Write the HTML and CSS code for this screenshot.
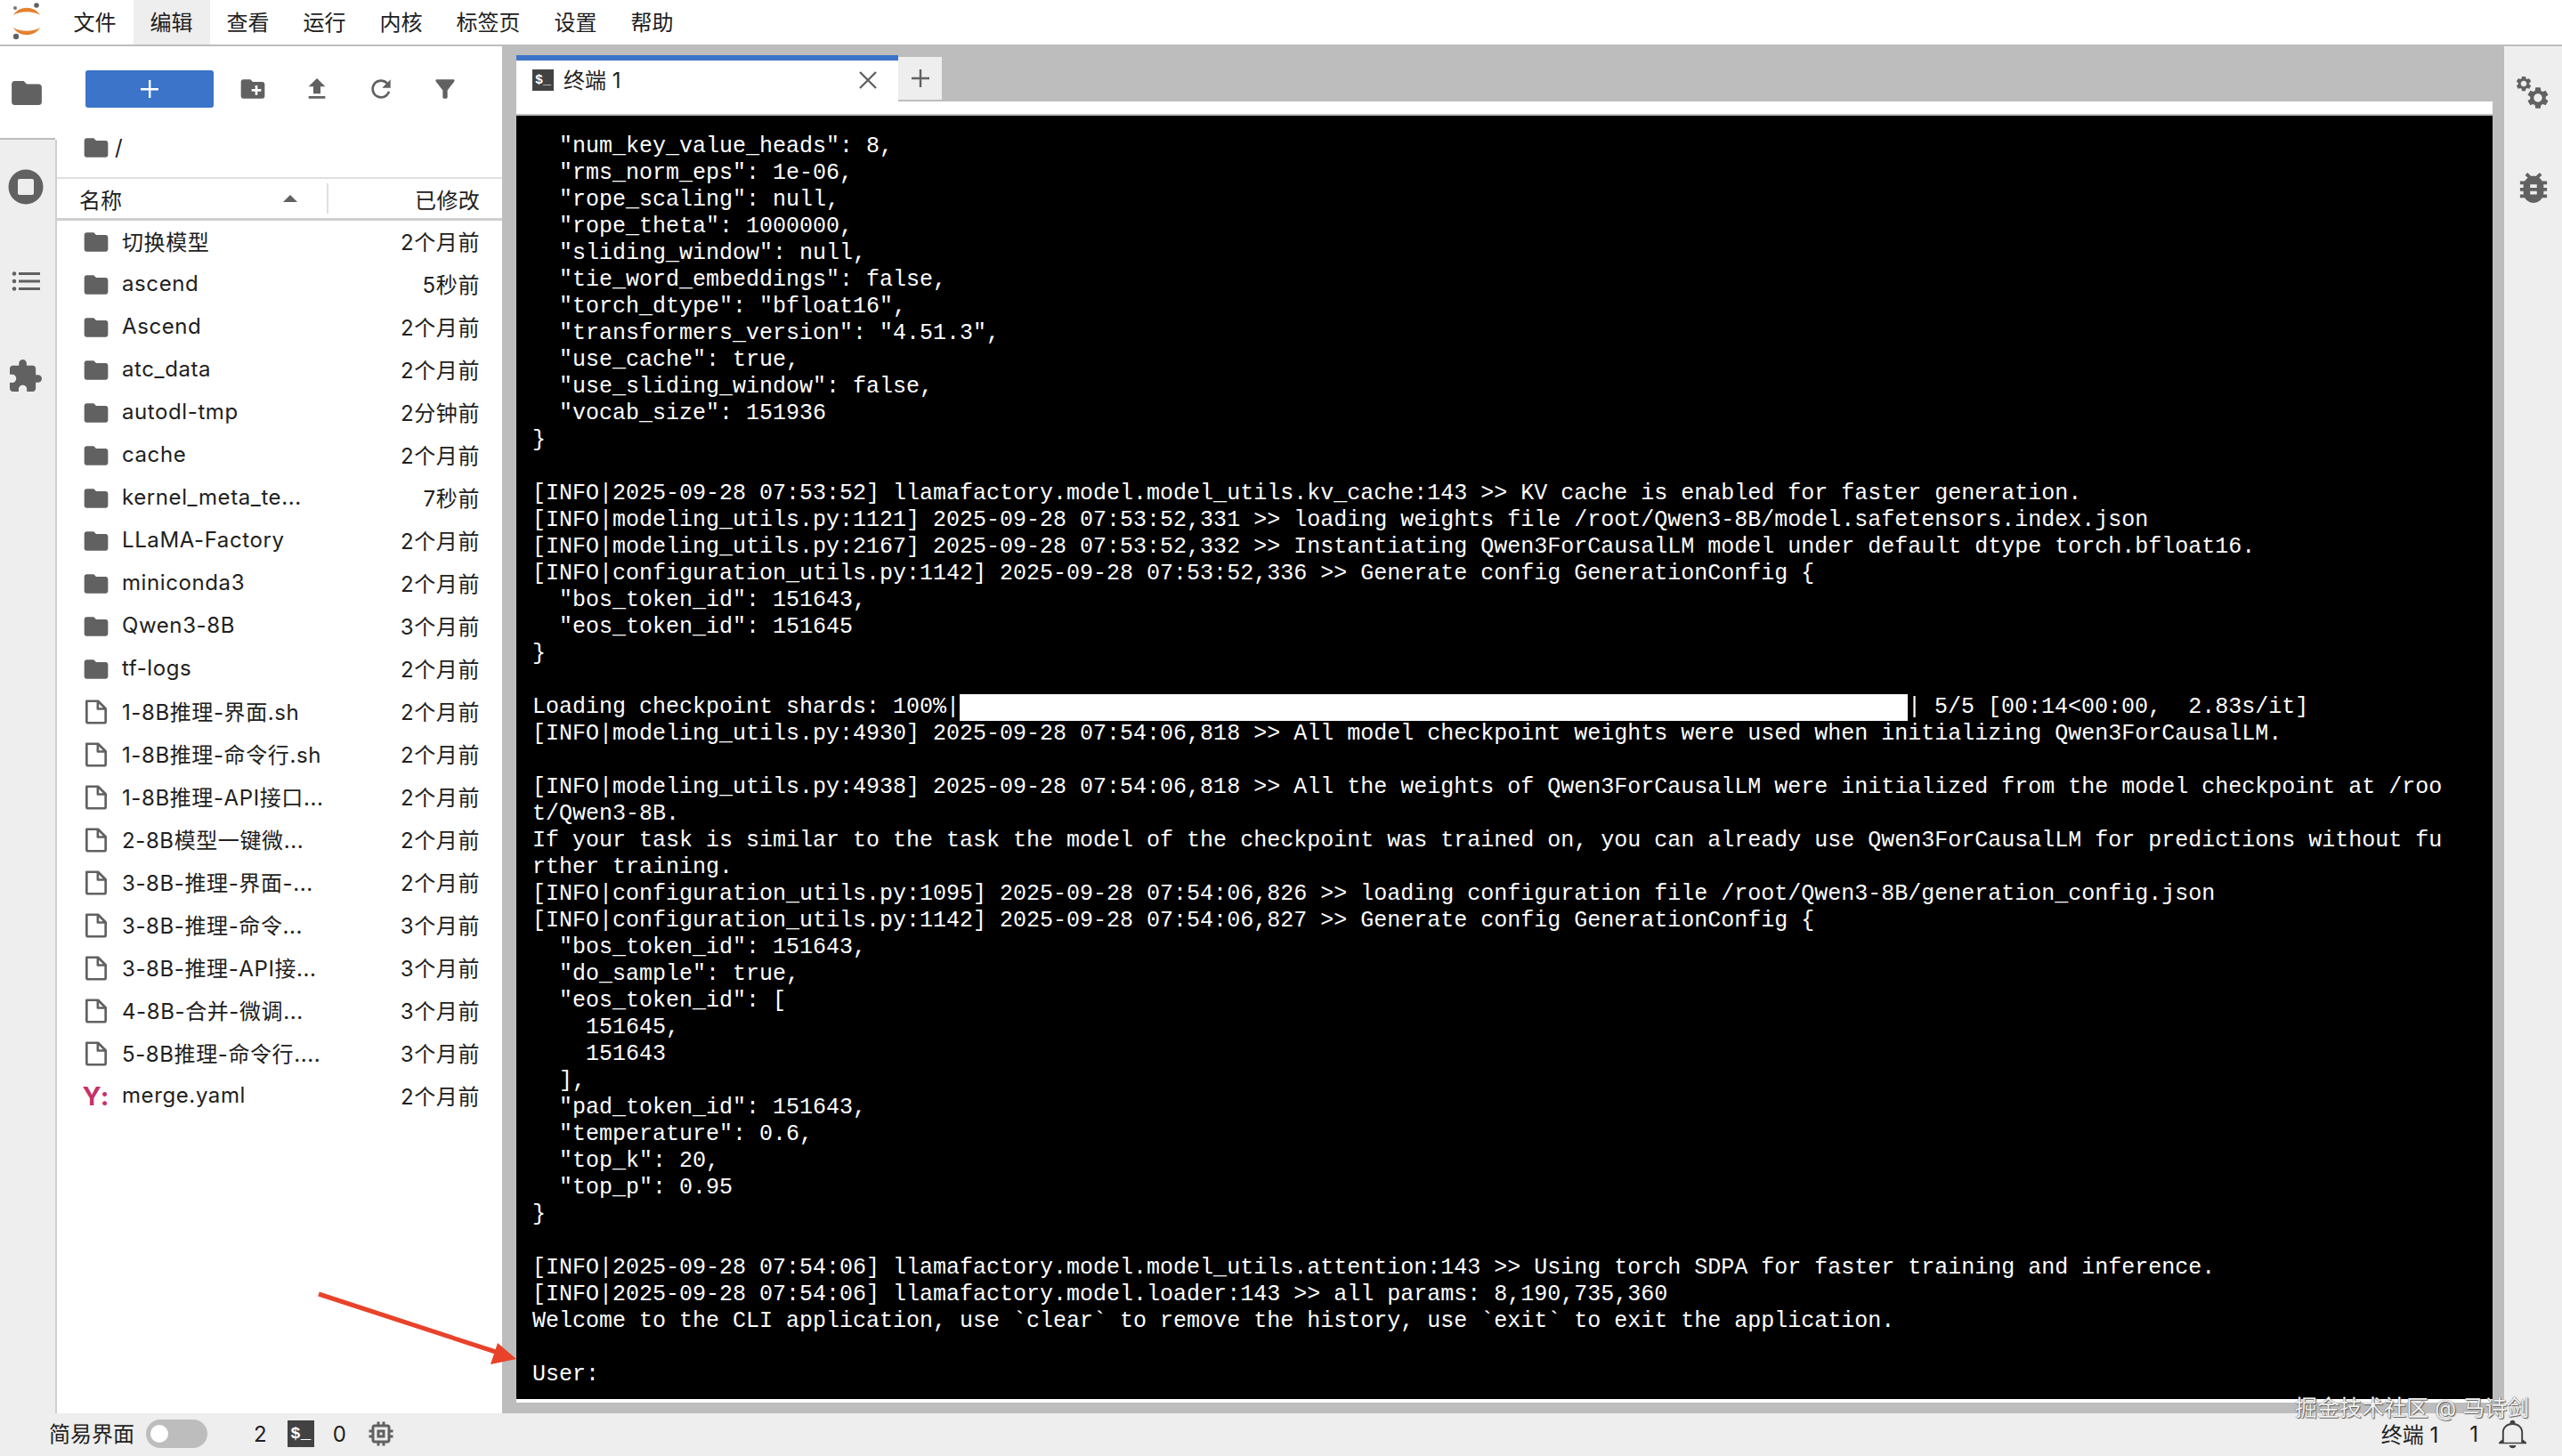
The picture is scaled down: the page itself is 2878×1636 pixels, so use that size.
FILE: index.html
```html
<!DOCTYPE html>
<html lang="zh">
<head>
<meta charset="utf-8">
<title>JupyterLab 终端</title>
<link rel="stylesheet" href="styles.css">
</head>
<body>
<svg class="defs" width="0" height="0" aria-hidden="true">
  <symbol id="i-folder" viewBox="0 0 24 24"><path d="M10 4H4c-1.100 0-1.990.9-1.990 2L2 18c0 1.100.9 2 2 2h16c1.100 0 2-.9 2-2V8c0-1.100-.9-2-2-2h-8l-2-2z"/></symbol>
  <symbol id="i-file" viewBox="0 0 24 24"><path class="outline" d="M4 2.800h9.600l6.400 6.400v10.600a1.400 1.400 0 0 1-1.400 1.400H5.400A1.400 1.400 0 0 1 4 19.800zM13.400 3v6.400H20"/></symbol>
  <symbol id="i-gear" viewBox="0 0 24 24"><path d="M19.430 12.980c.04-.32.07-.64.07-.98s-.03-.66-.07-.98l2.110-1.650c.19-.15.24-.42.12-.64l-2-3.460c-.12-.22-.39-.3-.61-.22l-2.490 1c-.52-.4-1.080-.73-1.690-.98l-.38-2.650C14.460 2.180 14.250 2 14 2h-4c-.25 0-.46.18-.49.42l-.38 2.650c-.61.25-1.170.59-1.690.98l-2.490-1c-.23-.09-.49 0-.61.22l-2 3.460c-.13.22-.07.49.12.64l2.110 1.650c-.04.32-.07.65-.07.98s.03.66.07.98l-2.110 1.650c-.19.15-.24.42-.12.64l2 3.460c.12.22.39.3.61.22l2.490-1c.52.4 1.080.73 1.690.98l.38 2.650c.03.24.24.42.49.42h4c.25 0 .46-.18.49-.42l.38-2.650c.61-.25 1.170-.59 1.690-.98l2.490 1c.23.09.49 0 .61-.22l2-3.460c.12-.22.07-.49-.12-.64l-2.110-1.650zM12 16c-2.200 0-4-1.800-4-4s1.800-4 4-4 4 1.800 4 4-1.800 4-4 4z"/></symbol>
</svg>
<div class="app">
  <header class="menu">
    <div class="logo">
      <svg viewBox="0 0 30 42" width="30" height="42">
        <path fill="#e6812f" d="M0 14C6 3 24 3 30 14 22 9 8 9 0 14zM0 28c8 5 22 5 30 0-6 11-24 11-30 0z"/>
        <circle cx="26" cy="3" r="2.800" fill="#616161"/><circle cx="2" cy="6" r="2" fill="#757575"/><circle cx="3" cy="38" r="3.200" fill="#616161"/>
      </svg>
    </div>
    <span class="menu-item">文件</span>
    <span class="menu-item active">编辑</span>
    <span class="menu-item">查看</span>
    <span class="menu-item">运行</span>
    <span class="menu-item">内核</span>
    <span class="menu-item">标签页</span>
    <span class="menu-item">设置</span>
    <span class="menu-item">帮助</span>
  </header>
  <main class="workspace">
    <nav class="rail rail-left">
      <div class="rail-tab current"><svg class="icon i34" viewBox="2 4 20 16"><use href="#i-folder" x="0" y="0" width="24" height="24"/></svg></div>
      <div class="rail-tab">
        <svg class="icon" width="40" height="40" viewBox="0 0 40 40"><circle cx="20" cy="20" r="19.500"/><rect x="11" y="11" width="18" height="18" rx="2" fill="#eee"/></svg>
      </div>
      <div class="rail-tab">
        <svg class="icon" width="32" height="22" viewBox="0 0 32 22"><circle cx="3" cy="2.500" r="2.300"/><circle cx="3" cy="11" r="2.300"/><circle cx="3" cy="19.500" r="2.300"/><rect x="8" y="1" width="24" height="3"/><rect x="8" y="9.500" width="24" height="3"/><rect x="8" y="18" width="24" height="3"/></svg>
      </div>
      <div class="rail-tab">
        <svg class="icon" width="36" height="38" viewBox="2 1 21 21"><path d="M20.500 11H19V7c0-1.100-.9-2-2-2h-4V3.500C13 2.120 11.880 1 10.500 1S8 2.120 8 3.500V5H4c-1.100 0-1.990.9-1.990 2v3.800H3.500c1.490 0 2.700 1.210 2.700 2.700s-1.210 2.700-2.700 2.700H2V20c0 1.100.9 2 2 2h3.800v-1.500c0-1.490 1.210-2.700 2.700-2.700 1.490 0 2.700 1.210 2.700 2.700V22H17c1.100 0 2-.9 2-2v-4h1.500c1.380 0 2.500-1.120 2.500-2.500S21.880 11 20.500 11z"/></svg>
      </div>
      <div class="rail-fill"></div>
    </nav>

    <section class="panel">
      <div class="toolbar">
        <button class="new-btn"><svg width="24" height="24" viewBox="0 0 24 24"><path d="M11 2h2.400v9H22v2.400h-8.600V22H11v-8.600H2V11h9z"/></svg></button>
        <svg class="icon tool" viewBox="0 0 24 24"><path d="M20 6h-8l-2-2H4c-1.110 0-1.990.89-1.990 2L2 18c0 1.110.89 2 2 2h16c1.110 0 2-.89 2-2V8c0-1.110-.89-2-2-2zm-1 8h-3v3h-2v-3h-3v-2h3V9h2v3h3v2z"/></svg>
        <svg class="icon tool" viewBox="0 0 24 24"><path d="M9 16h6v-6h4l-7-7-7 7h4zm-4 2h14v2H5z"/></svg>
        <svg class="icon tool" viewBox="0 0 24 24"><path d="M17.650 6.350C16.200 4.900 14.210 4 12 4c-4.420 0-7.990 3.580-7.990 8s3.570 8 7.990 8c3.730 0 6.840-2.550 7.730-6h-2.080c-.82 2.330-3.040 4-5.650 4-3.310 0-6-2.690-6-6s2.690-6 6-6c1.660 0 3.140.69 4.220 1.780L13 11h7V4l-2.350 2.350z"/></svg>
        <svg class="icon tool" viewBox="0 0 24 24"><path d="M4.250 5.610C6.270 8.200 10 13 10 13v6c0 .55.45 1 1 1h2c.55 0 1-.45 1-1v-6s3.720-4.800 5.740-7.390c.51-.66.04-1.610-.79-1.610H5.040c-.83 0-1.300.95-.79 1.610z"/></svg>
      </div>
      <div class="crumbs">
        <svg class="icon row-icon"><use href="#i-folder"/></svg>
        <span class="crumb-sep">/</span>
      </div>
      <div class="list-head">
        <span class="col-name">名称</span>
        <span class="sort-arrow"></span>
        <span class="col-date">已修改</span>
      </div>
      <ul class="files">
        <li><svg class="icon row-icon"><use href="#i-folder"/></svg><span class="name">切换模型</span><span class="date">2个月前</span></li>
        <li><svg class="icon row-icon"><use href="#i-folder"/></svg><span class="name">ascend</span><span class="date">5秒前</span></li>
        <li><svg class="icon row-icon"><use href="#i-folder"/></svg><span class="name">Ascend</span><span class="date">2个月前</span></li>
        <li><svg class="icon row-icon"><use href="#i-folder"/></svg><span class="name">atc_data</span><span class="date">2个月前</span></li>
        <li><svg class="icon row-icon"><use href="#i-folder"/></svg><span class="name">autodl-tmp</span><span class="date">2分钟前</span></li>
        <li><svg class="icon row-icon"><use href="#i-folder"/></svg><span class="name">cache</span><span class="date">2个月前</span></li>
        <li><svg class="icon row-icon"><use href="#i-folder"/></svg><span class="name">kernel_meta_te...</span><span class="date">7秒前</span></li>
        <li><svg class="icon row-icon"><use href="#i-folder"/></svg><span class="name">LLaMA-Factory</span><span class="date">2个月前</span></li>
        <li><svg class="icon row-icon"><use href="#i-folder"/></svg><span class="name">miniconda3</span><span class="date">2个月前</span></li>
        <li><svg class="icon row-icon"><use href="#i-folder"/></svg><span class="name">Qwen3-8B</span><span class="date">3个月前</span></li>
        <li><svg class="icon row-icon"><use href="#i-folder"/></svg><span class="name">tf-logs</span><span class="date">2个月前</span></li>
        <li><svg class="icon row-icon"><use href="#i-file"/></svg><span class="name">1-8B推理-界面.sh</span><span class="date">2个月前</span></li>
        <li><svg class="icon row-icon"><use href="#i-file"/></svg><span class="name">1-8B推理-命令行.sh</span><span class="date">2个月前</span></li>
        <li><svg class="icon row-icon"><use href="#i-file"/></svg><span class="name">1-8B推理-API接口...</span><span class="date">2个月前</span></li>
        <li><svg class="icon row-icon"><use href="#i-file"/></svg><span class="name">2-8B模型一键微...</span><span class="date">2个月前</span></li>
        <li><svg class="icon row-icon"><use href="#i-file"/></svg><span class="name">3-8B-推理-界面-...</span><span class="date">2个月前</span></li>
        <li><svg class="icon row-icon"><use href="#i-file"/></svg><span class="name">3-8B-推理-命令...</span><span class="date">3个月前</span></li>
        <li><svg class="icon row-icon"><use href="#i-file"/></svg><span class="name">3-8B-推理-API接...</span><span class="date">3个月前</span></li>
        <li><svg class="icon row-icon"><use href="#i-file"/></svg><span class="name">4-8B-合并-微调...</span><span class="date">3个月前</span></li>
        <li><svg class="icon row-icon"><use href="#i-file"/></svg><span class="name">5-8B推理-命令行....</span><span class="date">3个月前</span></li>
        <li><span class="row-icon yaml">Y:</span><span class="name">merge.yaml</span><span class="date">2个月前</span></li>
      </ul>
    </section>

    <section class="dock">
      <div class="tabbar">
        <div class="tab">
          <span class="term-icon tab-term">$_</span>
          <span class="tab-label">终端 1</span>
          <svg class="tab-close" width="22" height="22" viewBox="0 0 22 22"><path d="M2 2l18 18M20 2L2 20"/></svg>
        </div>
        <div class="tab-add"><svg width="22" height="22" viewBox="0 0 22 22"><path d="M11 1v20M1 11h20"/></svg></div>
      </div>
      <div class="tab-gap"></div>
      <pre class="terminal">  "num_key_value_heads": 8,
  "rms_norm_eps": 1e-06,
  "rope_scaling": null,
  "rope_theta": 1000000,
  "sliding_window": null,
  "tie_word_embeddings": false,
  "torch_dtype": "bfloat16",
  "transformers_version": "4.51.3",
  "use_cache": true,
  "use_sliding_window": false,
  "vocab_size": 151936
}

[INFO|2025-09-28 07:53:52] llamafactory.model.model_utils.kv_cache:143 &gt;&gt; KV cache is enabled for faster generation.
[INFO|modeling_utils.py:1121] 2025-09-28 07:53:52,331 &gt;&gt; loading weights file /root/Qwen3-8B/model.safetensors.index.json
[INFO|modeling_utils.py:2167] 2025-09-28 07:53:52,332 &gt;&gt; Instantiating Qwen3ForCausalLM model under default dtype torch.bfloat16.
[INFO|configuration_utils.py:1142] 2025-09-28 07:53:52,336 &gt;&gt; Generate config GenerationConfig {
  "bos_token_id": 151643,
  "eos_token_id": 151645
}

Loading checkpoint shards: 100%|<span class="progress"></span>| 5/5 [00:14&lt;00:00,  2.83s/it]
[INFO|modeling_utils.py:4930] 2025-09-28 07:54:06,818 &gt;&gt; All model checkpoint weights were used when initializing Qwen3ForCausalLM.

[INFO|modeling_utils.py:4938] 2025-09-28 07:54:06,818 &gt;&gt; All the weights of Qwen3ForCausalLM were initialized from the model checkpoint at /roo
t/Qwen3-8B.
If your task is similar to the task the model of the checkpoint was trained on, you can already use Qwen3ForCausalLM for predictions without fu
rther training.
[INFO|configuration_utils.py:1095] 2025-09-28 07:54:06,826 &gt;&gt; loading configuration file /root/Qwen3-8B/generation_config.json
[INFO|configuration_utils.py:1142] 2025-09-28 07:54:06,827 &gt;&gt; Generate config GenerationConfig {
  "bos_token_id": 151643,
  "do_sample": true,
  "eos_token_id": [
    151645,
    151643
  ],
  "pad_token_id": 151643,
  "temperature": 0.6,
  "top_k": 20,
  "top_p": 0.95
}

[INFO|2025-09-28 07:54:06] llamafactory.model.model_utils.attention:143 &gt;&gt; Using torch SDPA for faster training and inference.
[INFO|2025-09-28 07:54:06] llamafactory.model.loader:143 &gt;&gt; all params: 8,190,735,360
Welcome to the CLI application, use `clear` to remove the history, use `exit` to exit the application.

User:</pre>
      <div class="term-foot"></div>
    </section>

    <nav class="rail rail-right">
      <div class="rail-tab">
        <svg class="icon" width="38" height="38" viewBox="0 0 38 38">
          <use href="#i-gear" x="-2" y="-2" width="20" height="20"/>
          <use href="#i-gear" x="10" y="10" width="28" height="28"/>
        </svg>
      </div>
      <div class="rail-tab">
        <svg class="icon" width="34" height="36" viewBox="3 3 18 18"><path d="M20 8h-2.810c-.45-.78-1.070-1.450-1.820-1.960L17 4.410 15.590 3l-2.170 2.170C12.960 5.060 12.490 5 12 5c-.49 0-.96.06-1.410.17L8.410 3 7 4.410l1.620 1.630C7.880 6.550 7.260 7.220 6.810 8H4v2h2.090c-.05.33-.09.66-.09 1v1H4v2h2v1c0 .34.04.67.09 1H4v2h2.810c1.040 1.790 2.970 3 5.190 3s4.150-1.210 5.190-3H20v-2h-2.090c.05-.33.09-.66.09-1v-1h2v-2h-2v-1c0-.34-.04-.67-.09-1H20V8zm-6 8h-4v-2h4v2zm0-4h-4v-2h4v2z"/></svg>
      </div>
    </nav>
  </main>
  <footer class="status">
    <span class="mode-label">简易界面</span>
    <span class="toggle"><span class="knob"></span></span>
    <span class="count first">2</span>
    <span class="term-icon status-term">$_</span>
    <span class="count">0</span>
    <svg class="icon chip" viewBox="2 2 20 20"><path d="M15 9H9v6h6V9zm-2 4h-2v-2h2v2zm8-2V9h-2V7c0-1.100-.9-2-2-2h-2V3h-2v2h-2V3H9v2H7c-1.100 0-2 .9-2 2v2H3v2h2v2H3v2h2v2c0 1.100.9 2 2 2h2v2h2v-2h2v2h2v-2h2c1.100 0 2-.9 2-2v-2h2v-2h-2v-2h2zm-4 6H7V7h10v10z"/></svg>
    <span class="status-spacer"></span>
    <span class="status-term-name">终端 1</span>
    <span class="count notif">1</span>
    <svg class="icon bell" viewBox="3.500 2 17 20.500" preserveAspectRatio="none"><path d="M12 22c1.100 0 2-.9 2-2h-4c0 1.100.9 2 2 2zm6-6v-5c0-3.070-1.640-5.640-4.500-6.320V4c0-.83-.67-1.500-1.500-1.500s-1.500.67-1.500 1.500v.68C7.630 5.360 6 7.920 6 11v5l-2 2v1h16v-1l-2-2zm-1 2H7v-7c0-2.900 1.800-5.200 5-5.200s5 2.300 5 5.200v7z"/></svg>
  </footer>
  <svg class="arrow" width="240" height="100" viewBox="350 1445 240 100">
    <path d="M358 1454L560 1520" class="arrow-line"/>
    <path d="M559 1509L580 1527 551 1533z" class="arrow-head"/>
  </svg>
  <div class="watermark">掘金技术社区 @ 马诗剑</div>
</div>
</body>
</html>
```
FILE: styles.css
```css
* { box-sizing: border-box; }
html, body { margin: 0; padding: 0; }
body {
  width: 2878px;
  height: 1636px;
  overflow: hidden;
  background: #fff;
  color: #212121;
  font-family: Inter, "Noto Sans CJK SC", sans-serif;
  font-size: 24px;
}
.defs { position: absolute; }
.app { position: relative; display: flex; flex-direction: column; width: 2878px; height: 1636px; }
.icon { fill: #616161; display: block; flex: none; }
.outline { fill: none; stroke: #616161; stroke-width: 2; stroke-linejoin: round; }

/* menu */
.menu {
  display: flex;
  align-items: stretch;
  flex: none;
  height: 52px;
  background: #fff;
  border-bottom: 2px solid #bdbdbd;
}
.logo { width: 63.500px; padding: 3px 0 0 15px; }
.menu-item { display: flex; align-items: center; padding: 0 19px 3px; }
.menu-item.active { background: #eee; }

/* layout */
.workspace { flex: 1; display: flex; min-height: 0; }
.rail { flex: none; display: flex; flex-direction: column; background: #eee; }
.rail-left { width: 64px; background: #fff; }
.rail-right { width: 65px; }
.rail-tab { height: 106px; display: flex; align-items: center; justify-content: center; }
.rail-left .rail-tab { background: #eee; padding-right: 4px; border-right: 2px solid #cfcfcf; }
.rail-left .rail-tab.current { height: 105px; background: #fff; border-right: 0; padding-right: 4px; position: relative; }
.rail-left .rail-tab.current::after {
  content: ""; position: absolute; left: 0; right: 2px; bottom: 0; height: 2px; background: #bdbdbd;
}
.rail-fill { flex: 1; background: #eee; border-right: 2px solid #cfcfcf; }
.i34 { width: 34px; height: 27px; }

/* file panel */
.panel { flex: none; width: 500px; display: flex; flex-direction: column; background: #fff; }
.toolbar { height: 84px; display: flex; align-items: flex-start; padding: 27px 0 0 32px; }
.new-btn {
  width: 144px; height: 42px; padding: 0; border: 0; border-radius: 3px;
  background: #3b74c9; display: flex; align-items: center; justify-content: center; margin-right: 28px;
}
.new-btn svg { fill: #fff; }
.tool { width: 32px; height: 32px; margin: 5px 40px 0 0; }
.crumbs { height: 63px; display: flex; align-items: center; padding: 0 0 4px 28px; }
.crumb-sep { margin-left: 5px; }
.row-icon { width: 32px; height: 32px; flex: none; }
.list-head {
  height: 49px;
  flex: none;
  display: flex;
  align-items: center;
  position: relative;
  border-top: 2px solid #e0e0e0;
  border-bottom: 3px solid #cfcfcf;
  padding: 0 25px 0 25px;
}
.col-name { flex: none; }
.sort-arrow {
  margin-left: 181px; width: 0; height: 0;
  border-left: 8px solid transparent; border-right: 8px solid transparent; border-bottom: 8px solid #616161;
}
.col-date { margin-left: auto; letter-spacing: .3px; }
.list-head::after {
  content: ""; position: absolute; left: 303px; top: 5px; bottom: 5px; width: 2px; background: #e0e0e0;
}
.files { list-style: none; margin: 0; padding: 0; }
.files li { height: 48px; display: flex; align-items: center; padding: 0 25px 0 28px; color: #212121; letter-spacing: .6px; }
.name { margin: 0 0 3px 13px; white-space: nowrap; }
.date { margin: 0 0 3px auto; white-space: nowrap; }
.yaml { font-weight: 700; font-size: 29px; letter-spacing: 1px; color: #c7316b; text-align: center; line-height: 32px; }

/* terminal dock */
.dock {
  flex: 1;
  min-width: 0;
  display: flex;
  flex-direction: column;
  background: #bdbdbd;
  padding: 10px 13px 12px 16px;
}
.tabbar { flex: none; display: flex; height: 52px; align-items: stretch; }
.tab {
  width: 429px;
  display: flex;
  align-items: center;
  padding: 0 23px 2px 18px;
  background: #fff;
  border-top: 6px solid #3b74c9;
}
.term-icon {
  display: block; flex: none; background: #424242; color: #fff;
  font-family: "Liberation Mono", monospace; font-weight: 700; text-align: center; overflow: hidden;
}
.tab-term { width: 24px; height: 24px; font-size: 15px; line-height: 25px; }
.tab-label { margin: 0 0 3px 11px; }
.tab-close { margin-left: auto; fill: none; stroke: #616161; stroke-width: 2.400; }
.tab-add {
  width: 49px; margin: 2px 0 2px 0; background: #eee; display: flex; align-items: center; justify-content: center;
}
.tab-add svg { fill: none; stroke: #616161; stroke-width: 2.400; }
.tab-gap { flex: none; height: 14px; background: #fff; border-bottom: 0; }
.terminal {
  flex: 1;
  min-height: 0;
  overflow: hidden;
  margin: 0;
  padding: 20px 0 0 18px;
  background: #000;
  border-top: 2px solid #bdbdbd;
  background-clip: padding-box;
  color: #fff;
  font-family: "Liberation Mono", monospace;
  font-size: 25px;
  line-height: 30px;
  white-space: pre;
}
.progress { display: inline-block; width: 1065px; height: 30px; background: #fff; vertical-align: top; }
.term-foot { flex: none; height: 4px; background: #fff; }

/* status bar */
.status {
  flex: none;
  height: 48px;
  display: flex;
  align-items: center;
  background: #eee;
  padding: 0 39px 2px 55px;
}
.mode-label { flex: none; margin-bottom: 3px; }
.toggle {
  width: 69px; height: 32px; margin-left: 13px; border-radius: 16px; background: #bdbdbd;
  display: flex; align-items: center; padding-left: 5px;
}
.knob { width: 20px; height: 20px; border-radius: 50%; background: #fff; }
.count.first { margin-left: 52px; }
.status-term { width: 30px; height: 30px; margin: 0 21px 0 23px; font-size: 19px; line-height: 31px; }
.chip { width: 30px; height: 30px; margin-left: 24px; }
.status-spacer { flex: 1; }
.status-term-name { margin-bottom: 2px; }
.notif { margin-left: 35px; }
.bell { width: 33px; height: 33px; margin-left: 22px; fill: #424242; }

/* overlays */
.arrow { position: absolute; left: 350px; top: 1445px; overflow: visible; }
.arrow-line { stroke: #e8432a; stroke-width: 5; fill: none; }
.arrow-head { fill: #e8432a; }
.watermark {
  position: absolute;
  left: 2578px;
  top: 1567px;
  font-size: 25px;
  line-height: 30px;
  white-space: nowrap;
  color: #f2f2f2;
  text-shadow: 0 0 1px #333, 1px 1px 1px #666;
}
```
